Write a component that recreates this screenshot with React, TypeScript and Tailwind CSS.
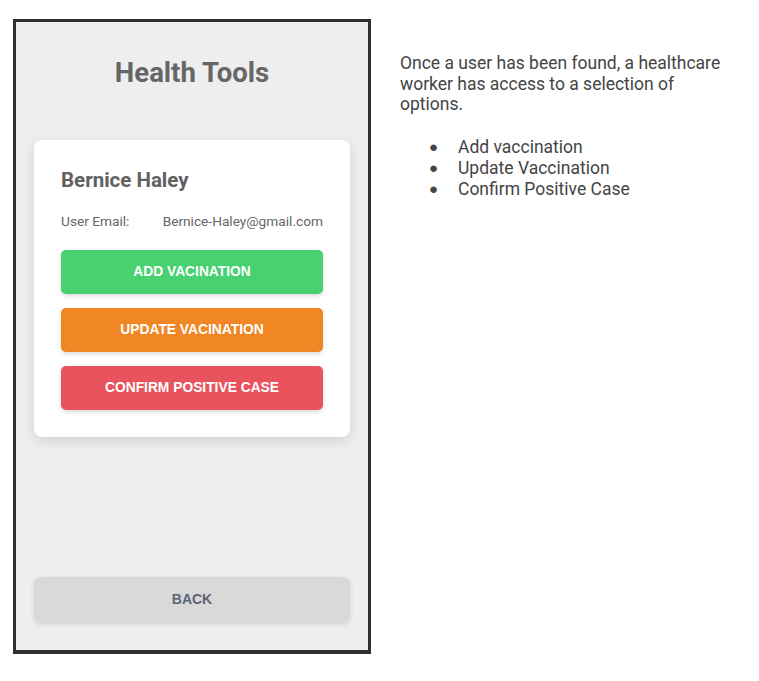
import React from "react";

export default function App() {
  return (
    <div className="w-[759px] h-[681px] bg-white flex items-start" style={{ fontFamily: "Roboto, 'Liberation Sans', sans-serif" }}>
      <div className="ml-[13px] mt-[19px] w-[358px] h-[635px] border-[3px] border-b-[4px] border-[#2f2f2f] bg-[#eeeeee] flex flex-col px-[18px]">
        <h1 className="mt-[35px] text-center text-[27.5px] leading-[32px] font-bold text-[#666666]">Health Tools</h1>
        <div className="mt-[51px] bg-white rounded-[8px] shadow-[0_4px_12px_rgba(0,0,0,0.12)] px-[27px] pt-[27px] pb-[27px]">
          <div className="text-[20.5px] leading-[26px] font-bold text-[#616161]">Bernice Haley</div>
          <div className="mt-[20px] flex justify-between text-[13.7px] leading-[17px] text-[#666666]">
            <span>User Email:</span>
            <span>Bernice-Haley@gmail.com</span>
          </div>
          <div className="mt-[20px] flex flex-col gap-[14px]" style={{ fontFamily: "'Liberation Sans', Arial, sans-serif" }}>
            <button className="h-[44px] rounded-[5px] bg-[#48d170] text-white text-[13.8px] font-bold shadow-[0_2px_4px_rgba(0,0,0,0.15)]">ADD VACINATION</button>
            <button className="h-[44px] rounded-[5px] bg-[#f08624] text-white text-[13.8px] font-bold shadow-[0_2px_4px_rgba(0,0,0,0.15)]">UPDATE VACINATION</button>
            <button className="h-[44px] rounded-[5px] bg-[#e9535e] text-white text-[13.8px] font-bold shadow-[0_2px_4px_rgba(0,0,0,0.15)]">CONFIRM POSITIVE CASE</button>
          </div>
        </div>
        <div className="flex-1" />
        <button className="mb-[28px] h-[45px] rounded-[6px] bg-[#d9d9d9] text-[#5b6477] text-[14px] font-bold shadow-[0_2px_5px_rgba(0,0,0,0.12)]" style={{ fontFamily: "'Liberation Sans', Arial, sans-serif" }}>BACK</button>
      </div>
      <div className="ml-[29px] mt-[53px] text-[17.5px] leading-[20.5px] text-[#444444]">
        <p>Once a user has been found, a healthcare<br />worker has access to a selection of<br />options.</p>
        <ul className="mt-[22px] ml-[29px]">
          <li className="flex items-center h-[21px]"><span className="w-[29px] text-[15px]">●</span>Add vaccination</li>
          <li className="flex items-center h-[21px]"><span className="w-[29px] text-[15px]">●</span>Update Vaccination</li>
          <li className="flex items-center h-[21px]"><span className="w-[29px] text-[15px]">●</span>Confirm Positive Case</li>
        </ul>
      </div>
    </div>
  );
}
